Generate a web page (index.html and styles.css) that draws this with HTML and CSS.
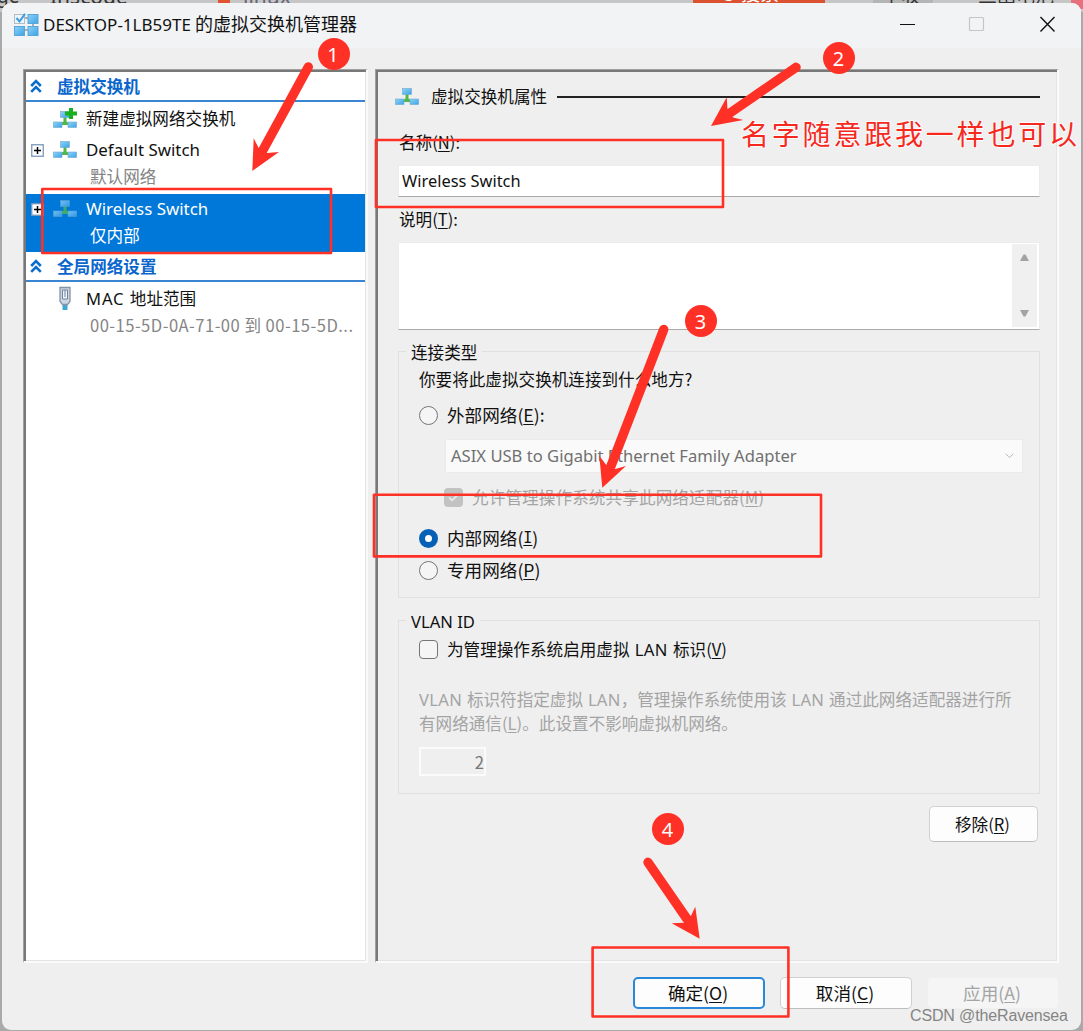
FILE: index.html
```html
<!DOCTYPE html>
<html lang="zh-CN">
<head>
<meta charset="utf-8">
<title>虚拟交换机管理器</title>
<link rel="stylesheet" href="styles.css">
</head>
<body>
<svg width="0" height="0" class="defs">
  <defs>
    <linearGradient id="blue" x1="0" y1="0" x2="1" y2="1"><stop offset="0" stop-color="#8fd2f8"/><stop offset="1" stop-color="#3ba3e6"/></linearGradient>
    <symbol id="switch" viewBox="0 0 24 17">
      <path d="M10.500 6h3v4.500l2.500 1.500v2H8v-2l2.500-1.500z" fill="#4fb848"/>
      <rect x="7.500" y=".5" width="9" height="6" fill="url(#blue)" stroke="#6fa9d0" stroke-width=".6"/>
      <rect x=".4" y="11" width="8.600" height="5.500" fill="url(#blue)" stroke="#6fa9d0" stroke-width=".6"/>
      <rect x="15" y="11" width="8.600" height="5.500" fill="url(#blue)" stroke="#6fa9d0" stroke-width=".6"/>
    </symbol>
    <symbol id="chevrons" viewBox="0 0 12 14"><path d="M1.200 7 6 2.200 10.800 7M1.200 12.800 6 8l4.800 4.800" fill="none" stroke="#0a6ccc" stroke-width="2.600"/></symbol>
    <symbol id="plus" viewBox="0 0 13 13"><rect x=".75" y=".75" width="11.500" height="11.500" fill="#fff" stroke="#7c98b8" stroke-width="1.300"/><path d="M3 6.500h7M6.500 3v7" stroke="#000" stroke-width="1.500"/></symbol>
  </defs>
</svg>

<div class="backdrop" aria-hidden="true">
  <span class="scrap s1">ge</span><span class="scrap s2">Inscode</span><span class="scrap s3"></span><span class="scrap s4">linux</span><span class="scrap s5">⏻ 搜索</span><span class="scrap s6">中收</span><span class="scrap s7">三田电池</span><span class="scrap s8"></span>
</div>

<div class="window">
  <header class="titlebar">
    <svg class="app-icon" width="25" height="23" viewBox="0 0 25 23">
      <path d="M8 5h8M8 17h8M19 9v5" stroke="#8d9aa5" stroke-width="1.500"/>
      <rect x=".5" y="1.500" width="10" height="9" fill="#eef5fa" stroke="#b0bcc6"/>
      <path d="M2.500 5l3 3.500L11 .8" fill="none" stroke="#3d9de0" stroke-width="2"/>
      <rect x="14" y="1.500" width="10" height="9" fill="url(#blue)" stroke="#5aa6d8"/>
      <rect x=".5" y="13.500" width="10" height="9" fill="url(#blue)" stroke="#5aa6d8"/>
      <rect x="14" y="13.500" width="10" height="9" fill="url(#blue)" stroke="#5aa6d8"/>
    </svg>
    <h1><span class="host">DESKTOP-1LB59TE</span> 的虚拟交换机管理器</h1>
    <svg class="controls" width="156" height="18" viewBox="0 0 156 18">
      <path d="M0 9.500h15" stroke="#111" stroke-width="1.200"/>
      <rect x="69.500" y="2.500" width="14" height="13" rx="1" fill="none" stroke="#c4c5c7" stroke-width="1.200"/>
      <path d="M140.500 2l14 14.500M154.500 2l-14 14.500" stroke="#111" stroke-width="1.400"/>
    </svg>
  </header>

  <main class="panes">
    <nav class="tree sunken">
      <div class="section"><svg width="12" height="14"><use href="#chevrons"/></svg><b>虚拟交换机</b></div>
      <div class="item new"><svg class="icon" width="24" height="20" viewBox="0 0 24 20"><use href="#switch" y="3" width="24" height="17"/><path d="M16 0h4v3.500h4v4h-4V11h-4V7.500h-4v-4h4z" fill="#18b01c"/></svg><span>新建虚拟网络交换机</span></div>
      <div class="item"><svg class="toggle" width="13" height="13"><use href="#plus"/></svg><svg class="icon" width="24" height="17"><use href="#switch"/></svg><span class="en tree-en">Default Switch</span></div>
      <div class="sub">默认网络</div>
      <div class="selected">
        <div class="item"><svg class="toggle" width="13" height="13"><use href="#plus"/></svg><svg class="icon dim" width="24" height="17"><use href="#switch"/></svg><span class="en tree-en">Wireless Switch</span></div>
        <div class="sub">仅内部</div>
      </div>
      <div class="section global"><svg width="12" height="14"><use href="#chevrons"/></svg><b>全局网络设置</b></div>
      <div class="item mac"><svg class="icon" width="24" height="25" viewBox="0 0 24 25"><path d="M9.500 17h5v7h-5z" fill="#40a6d2"/><path d="M7 1.500h10v14l-2.500 3h-5L7 15.500z" fill="#ccd6e2" stroke="#8595a9" stroke-width="1.300"/><path d="M9.500 4h5v9h-5zM12 4v7" fill="#eef4fa" stroke="#72829a"/></svg><span class="mixed"><span class="la mac-la">MAC</span> 地址范围</span></div>
      <div class="sub range">00-15-5D-0A-71-00 到 00-15-5D...</div>
    </nav>

    <section class="props sunken">
      <div class="heading"><svg width="24" height="17"><use href="#switch"/></svg><span>虚拟交换机属性</span><i></i></div>
      <div class="label name-label">名称(<u>N</u>):</div>
      <div class="field"><span class="en">Wireless Switch</span></div>
      <div class="label note-label">说明(<u>T</u>):</div>
      <div class="notes"><div class="scroll"><svg width="9" height="7"><path d="M3.500.5h2L9 7H0z" fill="#a3a3a3"/></svg><svg width="9" height="7"><path d="M0 0h9L5.500 6.500h-2z" fill="#a3a3a3"/></svg></div></div>

      <div class="group conn">
        <div class="legend">连接类型</div>
        <div class="question">你要将此虚拟交换机连接到什么地方?</div>
        <div class="option ext"><span class="radio"></span>外部网络(<u>E</u>):</div>
        <div class="select"><span class="en">ASIX USB to Gigabit Ethernet Family Adapter</span><svg width="9" height="6"><path d="M.7.7l3.800 4L8.300.7" fill="none" stroke="#b8b8b8"/></svg></div>
        <div class="share"><span class="check on"><svg width="19" height="19"><path d="M5 9.500l3.200 3L14 6.500" fill="none" stroke="#eee" stroke-width="1.500"/></svg></span>允许管理操作系统共享此网络适配器(<u>M</u>)</div>
        <div class="option int"><span class="radio active"></span>内部网络(<u class="wide-i">I</u>)</div>
        <div class="option priv"><span class="radio"></span>专用网络(<u>P</u>)</div>
      </div>

      <div class="group vlan">
        <div class="legend"><span class="la id-la">VLAN ID</span></div>
        <div class="option small"><span class="check"></span><span class="mixed">为管理操作系统启用虚拟 <span class="la">LAN</span> 标识(<u>V</u>)</span></div>
        <p><span class="la">VLAN</span> 标识符指定虚拟 <span class="la">LAN</span>，管理操作系统使用该 <span class="la">LAN</span> 通过此网络适配器进行所<br>有网络通信(<u>L</u>)。此设置不影响虚拟机网络。</p>
        <div class="number">2</div>
      </div>
      <div class="btn remove">移除(<u>R</u>)</div>
    </section>
  </main>

  <footer>
    <div class="btn primary">确定(<u>O</u>)</div>
    <div class="btn">取消(<u>C</u>)</div>
    <div class="btn disabled">应用(<u>A</u>)</div>
  </footer>
</div>

<svg class="marks" width="1083" height="1031" viewBox="0 0 1083 1031">
  <g fill="none" stroke="#ff3126" stroke-width="2.600" stroke-linejoin="round">
    <rect x="42.300" y="189" width="288.700" height="64"/>
    <rect x="376" y="140" width="347" height="67"/>
    <rect x="374" y="494.700" width="447" height="61.700"/>
    <rect x="592.600" y="947.500" width="195.800" height="69"/>
  </g>
  <g stroke="#ff3126" stroke-width="9.400" stroke-linecap="round">
    <path d="M308.300 67 263 150M796 67.300 730 113M663.700 329.500 611 466M648 862.300 687 919"/>
  </g>
  <g fill="#ff3126">
    <path d="M252.300 171l1.400-32.700 5 9.700 8.600 5 11.700-1z"/>
    <path d="M711 126l15.700-28.700.8 11.700 5.500 8.500 10.300 2.500z"/>
    <path d="M602.300 487.700l-3-32 6.700 9 9.300 4.300 10.700-3z"/>
    <path d="M699.700 938.700l-4.400-32-5 10.600-6.600 5.400-12 .6z"/>
    <circle cx="334" cy="54" r="16"/><circle cx="839" cy="58" r="16"/><circle cx="701" cy="321" r="16"/><circle cx="668" cy="829" r="16"/>
  </g>
  <g class="digits"><text x="333" y="62">1</text><text x="838.500" y="66">2</text><text x="700.500" y="329">3</text><text x="667.500" y="837">4</text></g>
  <text class="remark" x="741" y="145" textLength="336">名字随意跟我一样也可以</text>
  <text class="watermark" x="910" y="1021" textLength="158">CSDN @theRavensea</text>
</svg>
</body>
</html>
```
FILE: styles.css
```css
* { box-sizing: border-box; }
html, body { margin: 0; width: 1083px; height: 1031px; overflow: hidden; }
body {
  position: relative;
  background: #a9a9a9;
  color: #111;
  font: 16.6px/24px "Noto Sans CJK SC", "Noto Sans", sans-serif;
  white-space: nowrap;
  padding: 3px 2px 1px;
}
.defs { position: absolute; }
svg { display: block; flex: none; }
u { text-underline-offset: 2px; text-decoration-thickness: 1px; }
.en { font-family: "Noto Sans", sans-serif; font-size: 16.4px; }
.la { font-family: "Noto Sans", sans-serif; letter-spacing: .3px; line-height: 1; }
.mac-la { letter-spacing: .9px; }
.id-la { letter-spacing: 0; }
.mixed { word-spacing: 1.6px; }

.backdrop { position: absolute; left: 0; top: 0; width: 1083px; height: 12px; overflow: hidden; background: #c6c6c6; }
.scrap { position: absolute; top: -16px; font: 19px/24px "Noto Sans", "Noto Sans CJK SC", sans-serif; color: #333; }
.s1 { left: -3px; }
.s2 { left: 50px; font-size: 21px; }
.s3 { left: 218px; top: 0; width: 12px; height: 4px; background: #e0552f; }
.s4 { left: 243px; color: #667; font-size: 21px; }
.s5 { left: 693px; top: -18px; width: 132px; padding-left: 28px; background: #dc5231; color: #fff; }
.s6 { left: 873px; width: 60px; padding-left: 9px; background: #b5b5b5; }
.s7 { left: 978px; }
.s8 { left: 1071px; top: 0; width: 12px; height: 9px; background: #e8707c; }

.window {
  position: relative;
  height: 1027px;
  width: 1079px;
  border-radius: 9px;
  background: #efefef;
  overflow: hidden;
}
.titlebar { height: 45px; padding: 0 25px 3px 12px; display: flex; align-items: center; background: #f1f3f5; }
.titlebar h1 { margin: 0 auto 0 4px; font-size: 18px; font-weight: 400; line-height: 24px; }
.host { font-family: "Noto Sans", sans-serif; font-size: 17px; }

.panes { display: flex; gap: 7px; margin: 21px 0 0 21px; height: 894px; }
.sunken {
  border: solid;
  border-width: 1px 2px 2px 1px;
  border-color: #a0a0a0 #fafafa #fafafa #a0a0a0;
  box-shadow: inset 2px 2px #787878, inset -1px -1px #e4e4e4;
}
.tree { width: 345px; background: #fff; padding: 2px 1px 0 2px; }
.section { height: 29.5px; display: flex; align-items: center; gap: 15px; padding: 1px 0 0 4px; border-bottom: 2px solid #3a85d2; color: #0a66cc; }
.section b { font-weight: 700; }
.global { height: 30.5px; margin-bottom: -1px; }
.item { height: 32px; display: flex; align-items: center; padding-left: 27px; gap: 9px; }
.item .toggle { margin: 1px 0 0 -22px; }
.new { padding-top: 1px; }
.sub { height: 20px; line-height: 20px; padding-left: 64px; color: #858585; }
.tree-en { font-size: 16.9px; }
.selected { background: #0078d9; color: #fff; height: 58px; margin-top: 8px; }
.selected .item { height: 30px; }
.selected .sub { color: #fff; line-height: 22px; }
.dim { opacity: .8; }
.mac { height: 34px; }
.range { letter-spacing: .46px; }

.props { width: 684px; padding: 15px 17px 0 22px; }
.heading { display: flex; align-items: center; height: 24px; margin-left: -3px; }
.heading svg { margin-top: -2px; }
.heading span { margin: -2px 10px 0 12px; }
.heading i { flex: 1; height: 1.5px; background: #222; }
.label { height: 24px; margin-left: 1px; }
.name-label { margin-top: 21px; }
.note-label { margin-top: 10px; }
.field { height: 32px; margin-top: 11px; background: #fff; border: 1px solid #ececec; border-bottom-color: #aaa; padding-left: 3px; line-height: 29px; }
.notes { height: 88px; margin-top: 11px; background: #fff; border: 1px solid #ececec; border-bottom-color: #aaa; display: flex; justify-content: flex-end; padding: 1px 2px; }
.scroll { width: 25px; background: #f0f0f0; height: 83px; display: flex; flex-direction: column; justify-content: space-between; align-items: center; padding: 10px 0; }
.group { border: 1px solid #e0e0e0; width: 642px; padding-left: 20px; }
.legend { width: max-content; margin: -12px 0 0 -13px; padding: 0 5px; background: #efefef; height: 24px; }
.conn { height: 247px; margin-top: 21px; }
.question { height: 24px; margin-top: 3px; }
.option { display: flex; align-items: center; height: 24px; font-size: 17.6px; }
.radio, .check { width: 19px; height: 19px; flex: none; margin-right: 9px; border: 1.5px solid #757575; background: #f5f5f5; border-radius: 50%; }
.check { border-radius: 4px; }
.check.on { border: 0; background: #c2c2c2; }
.radio.active { border: 6px solid #0560b6; background: #fff; }
.wide-i { font-family: "DejaVu Sans Mono", monospace; font-size: 15px; }
.ext { margin-top: 12px; }
.select { margin: 12px 0 0 26px; width: 578px; height: 34px; background: #fafafa; border: 1px solid #ebebeb; display: flex; align-items: center; justify-content: space-between; padding: 0 8px 0 5px; color: #707070; }
.select .en { font-size: 16.6px; }
.share { display: flex; align-items: center; height: 24px; margin: 12px 0 0 25px; color: #a4a4a4; letter-spacing: .1px; }
.int { margin-top: 17px; }
.priv { margin-top: 8px; }
.vlan { height: 174px; margin-top: 22px; }
.vlan .option { margin-top: 4px; font-size: 16.6px; }
.vlan p { margin: 26px 0 0; color: #a4a4a4; word-spacing: 1.1px; }
.number { width: 67px; height: 29px; margin-top: 12px; border: 2px solid #fbfbfb; text-align: right; line-height: 26px; color: #777; }
.btn { width: 132px; height: 32px; padding-right: 2px; border: 1.5px solid #d0d0d0; border-bottom-color: #bdbdbd; border-radius: 5px; background: #fdfdfd; display: flex; align-items: center; justify-content: center; font-size: 17.6px; }
.remove { width: 109px; height: 36px; margin: 12px 2px 0 auto; padding-bottom: 1px; font-size: 16.6px; }
footer { display: flex; gap: 15px; justify-content: flex-end; padding: 14px 22px 0 0; }
.primary { border: 2px solid #2a88d8; }
.disabled { background: #f5f5f5; border-color: #f0f0f0; color: #a4a4a4; }

.marks { position: absolute; left: 0; top: 0; }
.digits { font: 20px "Noto Sans", sans-serif; fill: #fff; text-anchor: middle; }
.remark { font: 400 28px "Noto Sans CJK SC", sans-serif; fill: #f5291e; paint-order: stroke; stroke: #fff; stroke-width: 1.5px; }
.watermark { font: 16px "Liberation Sans", sans-serif; fill: #858585; }
```
